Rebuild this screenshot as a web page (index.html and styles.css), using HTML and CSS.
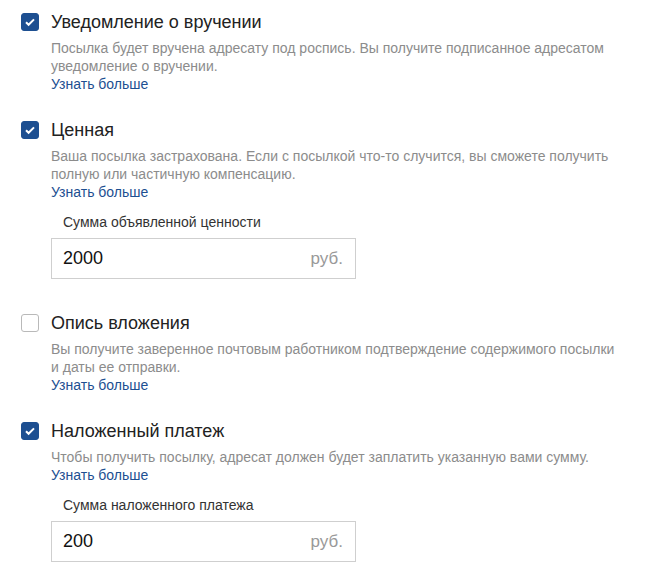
FILE: index.html
```html
<!DOCTYPE html>
<html lang="ru">
<head>
    <meta charset="UTF-8">
    <meta name="viewport" content="width=device-width, initial-scale=1.0">
    <title>Дополнительные услуги</title>
    <link rel="stylesheet" href="styles.css">
</head>
<body>
    <div class="options">
        <div class="option">
            <span class="check checked">
                <svg viewBox="0 0 18 18" width="18" height="18"><path d="M5 9.2l2.6 2.6L13 6.4" fill="none" stroke="#fff" stroke-width="2"/></svg>
            </span>
            <div class="body">
                <div class="title">Уведомление о вручении</div>
                <p class="desc">Посылка будет вручена адресату под роспись. Вы получите подписанное адресатом уведомление о вручении.</p>
                <a class="more" href="#">Узнать больше</a>
            </div>
        </div>

        <div class="option">
            <span class="check checked">
                <svg viewBox="0 0 18 18" width="18" height="18"><path d="M5 9.2l2.6 2.6L13 6.4" fill="none" stroke="#fff" stroke-width="2"/></svg>
            </span>
            <div class="body">
                <div class="title">Ценная</div>
                <p class="desc">Ваша посылка застрахована. Если с посылкой что-то случится, вы сможете получить полную или частичную компенсацию.</p>
                <a class="more" href="#">Узнать больше</a>
                <label class="field-label" for="value">Сумма объявленной ценности</label>
                <div class="field">
                    <input type="text" id="value" value="2000">
                    <span class="unit">руб.</span>
                </div>
            </div>
        </div>

        <div class="option">
            <span class="check"></span>
            <div class="body">
                <div class="title">Опись вложения</div>
                <p class="desc">Вы получите заверенное почтовым работником подтверждение содержимого посылки и даты ее отправки.</p>
                <a class="more" href="#">Узнать больше</a>
            </div>
        </div>

        <div class="option">
            <span class="check checked">
                <svg viewBox="0 0 18 18" width="18" height="18"><path d="M5 9.2l2.6 2.6L13 6.4" fill="none" stroke="#fff" stroke-width="2"/></svg>
            </span>
            <div class="body">
                <div class="title">Наложенный платеж</div>
                <p class="desc">Чтобы получить посылку, адресат должен будет заплатить указанную вами сумму.</p>
                <a class="more" href="#">Узнать больше</a>
                <label class="field-label" for="cod">Сумма наложенного платежа</label>
                <div class="field">
                    <input type="text" id="cod" value="200">
                    <span class="unit">руб.</span>
                </div>
            </div>
        </div>
    </div>
</body>
</html>
```

FILE: styles.css
```css
body {
    font-family: 'Liberation Sans', Arial, sans-serif;
    margin: 0;
    padding: 10px 0 0 21px;
    background: #fff;
    color: #222;
}
.options {
    width: 600px;
}
.option {
    display: grid;
    grid-template-columns: 18px 1fr;
    column-gap: 12px;
    margin-bottom: 25px;
}
.option:has(.field) {
    margin-bottom: 32px;
}
.check {
    width: 18px;
    height: 18px;
    margin-top: 3px;
    box-sizing: border-box;
    border: 1px solid #b9b9b9;
    border-radius: 3px;
    background: #fff;
}
.check.checked {
    border-color: #1d4f91;
    background: #1d4f91;
}
.check svg {
    display: block;
    margin: -1px;
}
.body {
    display: flex;
    flex-direction: column;
    align-items: flex-start;
}
.title {
    font-size: 18px;
    line-height: 24px;
    color: #222;
}
.desc {
    margin: 5px 0 0;
    font-size: 14px;
    line-height: 18px;
    color: #8c8c8c;
}
.more {
    font-size: 14px;
    line-height: 18px;
    color: #1d4f91;
    text-decoration: none;
}
.field-label {
    margin: 12px 0 0 12px;
    font-size: 14px;
    line-height: 18px;
    color: #333;
}
.field {
    display: flex;
    align-items: center;
    width: 305px;
    height: 41px;
    margin-top: 7px;
    box-sizing: border-box;
    border: 1px solid #cfcfcf;
    padding: 0 12px 0 11px;
}
.field input {
    flex: 1;
    min-width: 0;
    border: none;
    outline: none;
    padding: 0;
    font-family: inherit;
    font-size: 18px;
    color: #111;
    background: transparent;
}
.unit {
    font-size: 17px;
    color: #999;
}
```
